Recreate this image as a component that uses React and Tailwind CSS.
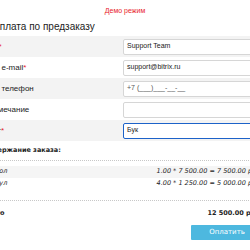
const fields = [
  { label: 'Имя', req: true, value: 'Support Team' },
  { label: 'Ваш e-mail', req: true, value: 'support@bitrix.ru' },
  { label: 'Ваш телефон', req: false, value: '', placeholder: '+7 (___)___-__-__' },
  { label: 'Примечание', req: false, value: '' },
  { label: 'Цвет', req: true, value: 'Бук', focus: true },
]

const items = [
  { name: 'Стол', calc: '1.00 * 7 500.00 = 7 500.00 руб.' },
  { name: 'Стул', calc: '4.00 * 1 250.00 = 5 000.00 руб.' },
]

export default function App() {
  return (
    <div className="w-[250px] h-[250px] overflow-hidden bg-white text-[#222] font-['Liberation_Sans',sans-serif]">
      <div className="pt-[6px] text-center text-[7px] leading-[10px] text-[#e8202a]">Демо режим</div>

      <div className="-ml-[17px] w-[280px]">
        <h1 className="pl-[9px] mt-[4px] text-[10px] leading-[14px]">Оплата по предзаказу</h1>

        <div className="mt-[2px]">
          {fields.map((f, i) => (
            <div key={f.label} className={`flex items-center h-[21px] ${i % 2 === 0 ? 'bg-[#f3f3f3]' : 'bg-white'}`}>
              <div className="w-[140px] shrink-0 text-[8px]">
                {f.label}
                {f.req && <span className="text-[#e8202a]">*</span>}
              </div>
              <div
                className={`flex-1 h-[16px] flex items-center px-[3px] text-[7px] bg-white rounded-[2px] ${
                  f.focus ? 'border border-[#1c62c9]' : 'border border-[#d6d6d6]'
                }`}
              >
                {f.value ? <span>{f.value}</span> : <span className="text-[#555]">{f.placeholder}</span>}
              </div>
            </div>
          ))}
        </div>

        <div className="mt-[4px] font-['DejaVu_Sans',sans-serif] text-[6.5px] font-bold leading-[10px]">
          Содержание заказа:
        </div>
        <div className="mt-[5px] border-t border-dotted border-[#c8c8c8]" />

        <div className="mt-[5px] font-['DejaVu_Sans',sans-serif] italic text-[6.5px]">
          {items.map((it, i) => (
            <div
              key={it.name}
              className={`flex justify-between items-center h-[12px] pl-2 pr-[1px] ${i === 0 ? 'bg-[#f5f5f5]' : ''}`}
            >
              <span>{it.name}</span>
              <span>{it.calc}</span>
            </div>
          ))}
        </div>

        <div className="mt-[10px] border-t border-dotted border-[#c8c8c8]" />

        <div className="mt-[7px] flex justify-between font-['DejaVu_Sans',sans-serif] text-[6.5px] font-bold leading-[10px] pr-[1px]">
          <span>Итого</span>
          <span>12 500.00 руб.</span>
        </div>

        <div className="mt-[7px] flex justify-end">
          <button className="w-[72px] h-[15px] bg-[#4db8df] text-white text-[7px] rounded-[1px] font-['DejaVu_Sans',sans-serif]">
            Оплатить
          </button>
        </div>
      </div>
    </div>
  )
}
